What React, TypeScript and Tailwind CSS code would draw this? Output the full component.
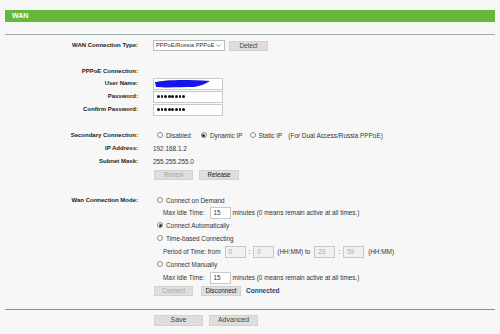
import React from "react";

const F = { fontFamily: '"Liberation Sans", Arial, sans-serif' };

function Row({ label, h = 13, mt = 0, children }: { label?: string; h?: number; mt?: number; children?: React.ReactNode }) {
  return (
    <div className="flex items-center" style={{ height: h, marginTop: mt }}>
      <div className="w-[138px] shrink-0 whitespace-nowrap text-right text-[6px] font-bold text-[#222]">{label}</div>
      <div className="ml-[15px] flex items-center whitespace-nowrap text-[6.4px] text-[#333]">{children}</div>
    </div>
  );
}

function Radio({ checked = false }: { checked?: boolean }) {
  return (
    <span className="mx-[4px] mr-[3px] flex h-[6px] w-[6px] items-center justify-center rounded-full border border-[#8a8a8a] bg-white">
      {checked && <span className="h-[3px] w-[3px] rounded-full bg-[#333]" />}
    </span>
  );
}

function Btn({ w, children, disabled = false, dark = false, big = false }: { w: number; children: React.ReactNode; disabled?: boolean; dark?: boolean; big?: boolean }) {
  return (
    <div
      className={`flex items-center justify-center border border-[#d2d2d2] bg-[#dedede] ${big ? "h-[11px] text-[7px]" : "h-[10px] text-[6.3px]"} ${disabled ? "text-[#a8a8a8]" : dark ? "text-[#222]" : "text-[#444]"}`}
      style={{ width: w }}
    >
      {children}
    </div>
  );
}

function Input({ w, children, disabled = false, h = 12 }: { w: number; children?: React.ReactNode; disabled?: boolean; h?: number }) {
  return (
    <div
      className={`flex items-center border border-[#c8c8c8] px-[3px] text-[6.3px] ${disabled ? "bg-[#f1f1f1] text-[#aaa]" : "bg-white text-[#333]"}`}
      style={{ width: w, height: h }}
    >
      {children}
    </div>
  );
}

function Dots() {
  return (
    <div className="flex gap-[0.8px]">
      {[0, 1, 2, 3, 4, 5, 6, 7].map((i) => (
        <span key={i} className="h-[2.8px] w-[2.8px] rounded-full bg-[#111]" />
      ))}
    </div>
  );
}

export default function App() {
  return (
    <div className="h-[334px] w-[500px] overflow-hidden bg-[#f7f7f7]" style={F}>
      <div className="mx-[5px] mt-[10px] flex h-[12px] items-center bg-[#68b83c] pl-[7px] text-[7px] font-bold text-white">WAN</div>
      <div className="mx-[5px] mt-[12px] h-px bg-[#9fb0ab]" />

      <Row label="WAN Connection Type:" mt={4}>
        <div className="flex h-[11px] w-[72px] items-center justify-between border border-[#bcbcbc] bg-white pl-[2px] pr-[3px] text-[5.8px] text-[#333]">
          <span className="whitespace-nowrap">PPPoE/Russia PPPoE</span>
          <svg width="5" height="3" viewBox="0 0 5 3"><path d="M0.5 0.5 L2.5 2.5 L4.5 0.5" stroke="#777" strokeWidth="0.7" fill="none" /></svg>
        </div>
        <div className="ml-[4px]">
          <Btn w={39}>Detect</Btn>
        </div>
      </Row>

      <Row label="PPPoE Connection:" h={12} mt={13} />
      <Row label="User Name:">
        <div className="relative">
          <Input w={70} />
          <svg className="absolute left-[1px] top-[1px]" width="58" height="10" viewBox="0 0 58 10">
            <path d="M1 3 C10 1 30 0 56 2 C52 5 46 7 40 8 C28 8 12 9 2 8 Z" fill="#1515e8" />
          </svg>
        </div>
      </Row>
      <Row label="Password:">
        <Input w={70}>
          <Dots />
        </Input>
      </Row>
      <Row label="Confirm Password:">
        <Input w={70}>
          <Dots />
        </Input>
      </Row>

      <Row label="Secondary Connection:" mt={13}>
        <Radio />
        <span>Disabled</span>
        <span className="ml-[6px]" />
        <Radio checked />
        <span>Dynamic IP</span>
        <span className="ml-[3px]" />
        <Radio />
        <span>Static IP</span>
        <span className="ml-[6px]">(For Dual Access/Russia PPPoE)</span>
      </Row>
      <Row label="IP Address:">
        <span>192.168.1.2</span>
      </Row>
      <Row label="Subnet Mask:">
        <span>255.255.255.0</span>
      </Row>
      <Row label="">
        <span className="ml-px" />
        <Btn w={39} disabled>Renew</Btn>
        <span className="ml-[6px]" />
        <Btn w={40} dark>Release</Btn>
      </Row>

      <Row label="Wan Connection Mode:" mt={13}>
        <Radio />
        <span>Connect on Demand</span>
      </Row>
      <Row label="" h={12}>
        <span className="ml-[10px]">Max Idle Time:</span>
        <span className="ml-[5px]" />
        <Input w={21}>15</Input>
        <span className="ml-[2px]">minutes (0 means remain active at all times.)</span>
      </Row>
      <Row label="">
        <Radio checked />
        <span>Connect Automatically</span>
      </Row>
      <Row label="">
        <Radio />
        <span>Time-based Connecting</span>
      </Row>
      <Row label="">
        <span className="ml-[10px]">Period of Time: from</span>
        <span className="ml-[4px]" />
        <Input w={21} disabled>0</Input>
        <span className="mx-[3px]">:</span>
        <Input w={21} disabled>0</Input>
        <span className="ml-[3px] mr-[4px]">(HH:MM) to</span>
        <Input w={21} disabled>23</Input>
        <span className="mx-[3px]">:</span>
        <Input w={21} disabled>59</Input>
        <span className="ml-[4px]">(HH:MM)</span>
      </Row>
      <Row label="">
        <Radio />
        <span>Connect Manually</span>
      </Row>
      <Row label="">
        <span className="ml-[10px]">Max Idle Time:</span>
        <span className="ml-[5px]" />
        <Input w={21}>15</Input>
        <span className="ml-[2px]">minutes (0 means remain active at all times.)</span>
      </Row>
      <Row label="">
        <span className="ml-px" />
        <Btn w={39} disabled>Connect</Btn>
        <span className="ml-[8px]" />
        <Btn w={40} dark>Disconnect</Btn>
        <span className="ml-[5px] text-[6.5px] font-bold text-[#1d3f7a]">Connected</span>
      </Row>

      <div className="mx-[5px] mt-[12px] h-px bg-[#6f9f92]" />
      <Row label="" h={12} mt={4}>
        <span className="ml-px" />
        <Btn w={49} big>Save</Btn>
        <span className="ml-[6px]" />
        <Btn w={49} big>Advanced</Btn>
      </Row>
    </div>
  );
}
